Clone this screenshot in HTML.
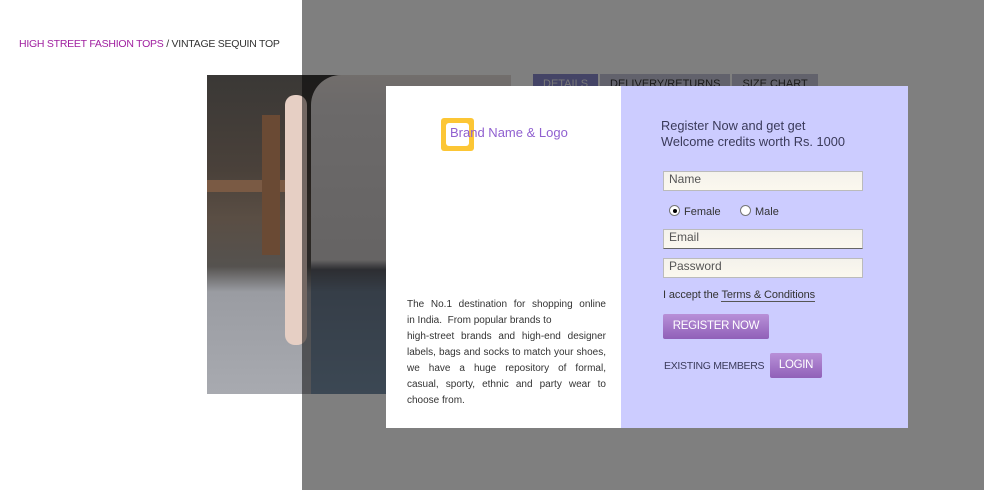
<!DOCTYPE html>
<html><head><meta charset="utf-8"><style>
*{margin:0;padding:0;box-sizing:border-box}
body{width:984px;height:490px;position:relative;overflow:hidden;background:#fff;font-family:"Liberation Sans",sans-serif}
.bc{position:absolute;left:19px;top:38px;font-size:10.5px;color:#333;letter-spacing:-0.25px}
.bc span{color:#a020a0}
.photo{position:absolute;left:207px;top:75px;width:304px;height:319px;overflow:hidden;
background:linear-gradient(180deg,#3a3836 0%,#4a413a 30%,#5a4e44 45%,#55524f 60%,#9a9ca2 68%,#a8aab0 100%)}
.photo .post{position:absolute;left:55px;top:40px;width:18px;height:140px;background:#6a4a34}
.photo .beam{position:absolute;left:0;top:105px;width:100px;height:12px;background:#7a5a44}
.photo .fig{position:absolute;left:104px;top:0;width:200px;height:319px;
background:linear-gradient(180deg,#e4dcd8 0%,#d8d4d4 10%,#ccc8c8 58%,#5a5c64 61%,#6c7c90 68%,#7890a8 100%);border-radius:30px 0 0 0}
.photo .arm{position:absolute;left:78px;top:20px;width:22px;height:250px;background:#e6cfc4;border-radius:10px}
.tabs{position:absolute;left:533px;top:74px;display:flex;gap:2px}
.tabs div{background:#c4c4d8;color:#333;font-size:11px;padding:4px 10px;height:20px}
.tabs div:first-child{background:#8888cc;color:#eee}
.ov{position:absolute;left:302px;top:0;width:682px;height:490px;background:rgba(0,0,0,0.5)}
.modal{position:absolute;left:386px;top:86px;width:522px;height:342px;background:#fff}
.right{position:absolute;left:235px;top:0;width:287px;height:342px;background:#ccccff}
.logo{position:absolute;left:55px;top:32px;width:33px;height:33px;background:#fcc635;border-radius:3px}
.logo i{position:absolute;left:5px;top:5px;width:23px;height:23px;background:#fff;border-radius:3px}
.lt{position:absolute;left:64px;top:39px;font-size:13px;color:#9060d0}
.desc{position:absolute;left:21px;top:211px;width:199px;font-size:10px;line-height:16px;color:#333}
.desc div{white-space:nowrap}
.desc .j{text-align:justify;text-align-last:justify;white-space:normal}
.h{position:absolute;left:40px;top:32px;font-size:12.8px;line-height:16px;color:#3a3a5a}
.in{position:absolute;left:42px;width:200px;height:20px;background:linear-gradient(#f4f2ec,#fbf8ee);border:1px solid #bbb;font-size:12px;color:#555;padding:0 5px;line-height:14px}
.rad{position:absolute;top:119px;font-size:11px;color:#333}
.rad b{display:inline-block;width:11px;height:11px;border:1px solid #777;border-radius:50%;background:#fff;vertical-align:-1px;margin-right:4px;position:relative}
.rad b.on:after{content:"";position:absolute;left:2.5px;top:2.5px;width:4px;height:4px;border-radius:50%;background:#000}
.acc{position:absolute;left:42px;top:203px;font-size:11px;color:#333;letter-spacing:-0.1px}
.acc u{text-decoration:none;border-bottom:1px solid #555}
.btn{position:absolute;background:linear-gradient(#b890d8,#9060b8);color:#fff;font-size:11.5px;text-align:center;border-radius:2px;letter-spacing:-0.3px}
.ex{position:absolute;left:43px;top:274px;font-size:10.5px;color:#3a3a5a;letter-spacing:-0.3px}
</style></head><body>
<div class="bc"><span>HIGH STREET FASHION TOPS</span> / VINTAGE SEQUIN TOP</div>
<div class="photo"><div class="beam"></div><div class="post"></div><div class="fig"></div><div class="arm"></div></div>
<div class="tabs"><div>DETAILS</div><div>DELIVERY/RETURNS</div><div>SIZE CHART</div></div>
<div class="ov"></div>
<div class="modal">
<div class="logo"><i></i></div>
<div class="lt">Brand Name &amp; Logo</div>
<div class="desc">
<div class="j">The No.1 destination for shopping online</div>
<div>in India.&nbsp; From popular brands to</div>
<div class="j">high-street brands and high-end designer</div>
<div class="j">labels, bags and socks to match your shoes,</div>
<div class="j">we have a huge repository of formal,</div>
<div class="j">casual, sporty, ethnic and party wear to</div>
<div>choose from.</div>
</div>
<div class="right">
<div class="h">Register Now and get get<br>Welcome credits worth Rs. 1000</div>
<div class="in" style="top:85px">Name</div>
<div class="rad" style="left:48px"><b class="on"></b>Female</div>
<div class="rad" style="left:119px"><b></b>Male</div>
<div class="in" style="top:143px;border-bottom-color:#666">Email</div>
<div class="in" style="top:172px">Password</div>
<div class="acc">I accept the <u>Terms &amp; Conditions</u></div>
<div class="btn" style="left:42px;top:228px;width:106px;height:25px;line-height:25px">REGISTER NOW</div>
<div class="ex">EXISTING MEMBERS</div>
<div class="btn" style="left:149px;top:267px;width:52px;height:25px;line-height:25px">LOGIN</div>
</div></div>
</body></html>
